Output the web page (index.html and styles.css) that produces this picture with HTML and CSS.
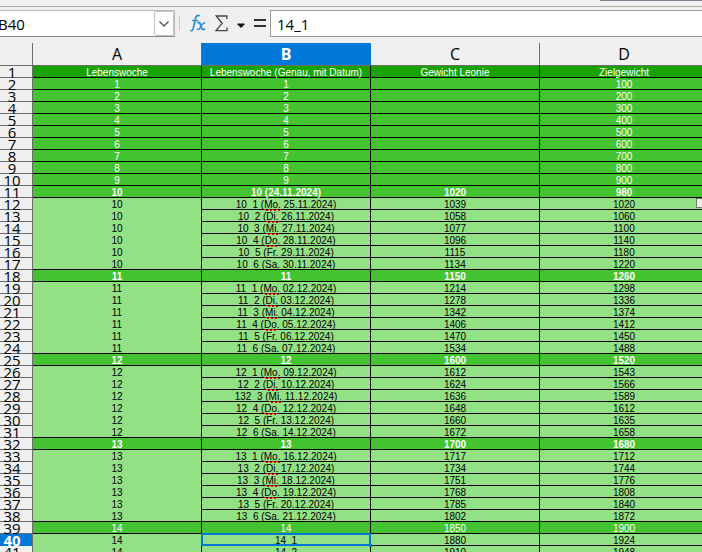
FILE: index.html
```html
<!DOCTYPE html>
<html lang="de">
<head>
<meta charset="utf-8">
<title>Lebenswoche</title>
<link rel="stylesheet" href="styles.css">
</head>
<body>
<div class="top-strip"><span class="top-edge"></span></div>
<form class="formula-bar">
  <div class="name-box">
    <input class="name-input" type="text" value="B40" aria-label="Namenfeld">
    <button class="name-drop" type="button" aria-label="Bereich wählen"><svg width="10" height="6" viewBox="0 0 10 6"><path d="M0.5 0.5 5 5 9.5 0.5" fill="none" stroke="#444" stroke-width="1.2"/></svg></button>
  </div>
  <div class="tools">
    <button class="tool" type="button" aria-label="Funktionsassistent"><svg width="16" height="18" viewBox="0 0 16 18" fill="none" stroke="#2e8fce"><path d="M9.6 2C7.4 0.6 6.1 1.8 5.6 4L3.4 14C2.9 16.4 1.8 17.2 0.3 16.5" stroke-width="1.7"/><path d="M2.2 6.5H8.2" stroke-width="1.4"/><path d="M7.4 8.9C9.4 7.7 10.2 9 10.7 11.4 11.3 15 12.2 16.2 15 14.8" stroke-width="1.9"/><path d="M15.2 8.7C12.4 8.5 11.2 12.2 9.6 14.6 8.9 15.7 8 15.8 6.8 15.3" stroke-width="1.5"/></svg></button>
    <button class="tool" type="button" aria-label="Summe"><svg width="13" height="17" viewBox="0 0 13 17"><path d="M11.9 4V1H1.2L7.2 8.3 1 15.6H12V12.6" fill="none" stroke="#444" stroke-width="1.3"/></svg></button>
    <button class="tool" type="button" aria-label="Funktion wählen"><svg width="8" height="9" viewBox="0 0 8 9"><path d="M0.5 4.5H7.5V5.5L4 9 0.5 5.5Z" fill="#111"/></svg></button>
    <button class="tool" type="button" aria-label="Formel"><svg width="12" height="9" viewBox="0 0 12 9"><path d="M0 1H12M0 7H12" stroke="#333" stroke-width="2"/></svg></button>
  </div>
  <input class="formula-input" type="text" value="14_1" aria-label="Eingabezeile">
</form>
<main class="sheet">
<table class="grid">
<colgroup><col class="col-num"><col class="col"><col class="col"><col class="col"><col class="col"></colgroup>
<thead><tr><th></th><th>A</th><th class="active">B</th><th>C</th><th>D</th></tr></thead>
<tbody>
<tr class="title"><th>1</th><td>Lebenswoche</td><td>Lebenswoche (Genau, mit Datum)</td><td>Gewicht Leonie</td><td>Zielgewicht</td></tr>
<tr class="week"><th>2</th><td>1</td><td>1</td><td></td><td>100</td></tr>
<tr class="week"><th>3</th><td>2</td><td>2</td><td></td><td>200</td></tr>
<tr class="week"><th>4</th><td>3</td><td>3</td><td></td><td>300</td></tr>
<tr class="week"><th>5</th><td>4</td><td>4</td><td></td><td>400</td></tr>
<tr class="week"><th>6</th><td>5</td><td>5</td><td></td><td>500</td></tr>
<tr class="week"><th>7</th><td>6</td><td>6</td><td></td><td>600</td></tr>
<tr class="week"><th>8</th><td>7</td><td>7</td><td></td><td>700</td></tr>
<tr class="week"><th>9</th><td>8</td><td>8</td><td></td><td>800</td></tr>
<tr class="week"><th>10</th><td>9</td><td>9</td><td></td><td>900</td></tr>
<tr class="week bold"><th>11</th><td>10</td><td>10 (24.11.2024)</td><td>1020</td><td>980</td></tr>
<tr><th>12</th><td>10</td><td>10_1 (<u>Mo.</u> 25.11.2024)</td><td>1039</td><td class="noted">1020</td></tr>
<tr><th>13</th><td>10</td><td>10_2 (<u>Di.</u> 26.11.2024)</td><td>1058</td><td>1060</td></tr>
<tr><th>14</th><td>10</td><td>10_3 (<u>Mi.</u> 27.11.2024)</td><td>1077</td><td>1100</td></tr>
<tr><th>15</th><td>10</td><td>10_4 (<u>Do</u>. 28.11.2024)</td><td>1096</td><td>1140</td></tr>
<tr><th>16</th><td>10</td><td>10_5 (Fr. 29.11.2024)</td><td>1115</td><td>1180</td></tr>
<tr class="last"><th>17</th><td>10</td><td>10_6 (Sa. 30.11.2024)</td><td>1134</td><td>1220</td></tr>
<tr class="week bold"><th>18</th><td>11</td><td>11</td><td>1150</td><td>1260</td></tr>
<tr><th>19</th><td>11</td><td>11_1 (<u>Mo.</u> 02.12.2024)</td><td>1214</td><td>1298</td></tr>
<tr><th>20</th><td>11</td><td>11_2 (<u>Di.</u> 03.12.2024)</td><td>1278</td><td>1336</td></tr>
<tr><th>21</th><td>11</td><td>11_3 (<u>Mi.</u> 04.12.2024)</td><td>1342</td><td>1374</td></tr>
<tr><th>22</th><td>11</td><td>11_4 (<u>Do</u>. 05.12.2024)</td><td>1406</td><td>1412</td></tr>
<tr><th>23</th><td>11</td><td>11_5 (Fr. 06.12.2024)</td><td>1470</td><td>1450</td></tr>
<tr class="last"><th>24</th><td>11</td><td>11_6 (Sa. 07.12.2024)</td><td>1534</td><td>1488</td></tr>
<tr class="week bold"><th>25</th><td>12</td><td>12</td><td>1600</td><td>1520</td></tr>
<tr><th>26</th><td>12</td><td>12_1 (<u>Mo.</u> 09.12.2024)</td><td>1612</td><td>1543</td></tr>
<tr><th>27</th><td>12</td><td>12_2 (<u>Di.</u> 10.12.2024)</td><td>1624</td><td>1566</td></tr>
<tr><th>28</th><td>12</td><td>132_3 (<u>Mi.</u> 11.12.2024)</td><td>1636</td><td>1589</td></tr>
<tr><th>29</th><td>12</td><td>12_4 (<u>Do</u>. 12.12.2024)</td><td>1648</td><td>1612</td></tr>
<tr><th>30</th><td>12</td><td>12_5 (Fr. 13.12.2024)</td><td>1660</td><td>1635</td></tr>
<tr class="last"><th>31</th><td>12</td><td>12_6 (Sa. 14.12.2024)</td><td>1672</td><td>1658</td></tr>
<tr class="week bold"><th>32</th><td>13</td><td>13</td><td>1700</td><td>1680</td></tr>
<tr><th>33</th><td>13</td><td>13_1 (<u>Mo.</u> 16.12.2024)</td><td>1717</td><td>1712</td></tr>
<tr><th>34</th><td>13</td><td>13_2 (<u>Di.</u> 17.12.2024)</td><td>1734</td><td>1744</td></tr>
<tr><th>35</th><td>13</td><td>13_3 (<u>Mi.</u> 18.12.2024)</td><td>1751</td><td>1776</td></tr>
<tr><th>36</th><td>13</td><td>13_4 (<u>Do</u>. 19.12.2024)</td><td>1768</td><td>1808</td></tr>
<tr><th>37</th><td>13</td><td>13_5 (Fr. 20.12.2024)</td><td>1785</td><td>1840</td></tr>
<tr class="last"><th>38</th><td>13</td><td>13_6 (Sa. 21.12.2024)</td><td>1802</td><td>1872</td></tr>
<tr class="week"><th>39</th><td>14</td><td>14</td><td>1850</td><td>1900</td></tr>
<tr><th class="active">40</th><td>14</td><td class="cursor">14_1</td><td>1880</td><td>1924</td></tr>
<tr><th>41</th><td>14</td><td>14_2</td><td>1910</td><td>1948</td></tr>
</tbody>
</table>
</main>
</body>
</html>
```
FILE: styles.css
```css
* { box-sizing: border-box; }

body {
  margin: 0;
  height: 100vh;
  overflow: hidden;
  background: #f0f0f0;
  font-family: "Open Sans", "Noto Sans", sans-serif;
  color: #000;
}

.top-strip {
  display: flex;
  justify-content: flex-end;
  height: 7px;
  border-bottom: 1px solid #adadad;
}

.top-edge { width: 102px; height: 1px; background: #7d8290; }

.formula-bar {
  display: flex;
  align-items: flex-start;
  padding-top: 3px;
  height: 36px;
}

.name-box {
  display: flex;
  width: 175px;
  height: 27px;
  background: #fff;
  border: 1px solid #b8b8b8;
  border-left: 0;
  border-bottom-color: #868686;
}

.name-input,
.formula-input {
  min-width: 0;
  padding: 0;
  border: 0;
  background: #fff;
  font: 15px/24px "Open Sans", "Noto Sans", sans-serif;
  color: #000;
  outline: 0;
}

.name-input { flex: 1; text-indent: -2px; }

.name-drop {
  display: flex;
  align-items: center;
  justify-content: center;
  width: 20px;
  padding: 0;
  border: 1px solid #c4c4c4;
  border-radius: 2px;
  background: #fdfdfd;
}

.tools {
  display: flex;
  align-items: center;
  gap: 9px;
  height: 26px;
  margin-left: 4px;
  padding-left: 11px;
  background: linear-gradient(#c8c8c8, #c8c8c8) 0 6px / 1px 14px no-repeat;
}

.tool { display: flex; padding: 0; border: 0; background: none; }

.formula-input {
  flex: 1;
  height: 27px;
  margin-left: 4px;
  padding-left: 6px;
  border: 1px solid #9a9a9a;
  border-right: 0;
}

.sheet { overflow: hidden; }

.grid {
  width: 709px;
  table-layout: fixed;
  border-collapse: separate;
  border-spacing: 0;
}

.col-num { width: 33px; }
.col { width: 169px; }

th {
  padding: 0;
  border: solid #6c6c6c;
  border-width: 0 1px 1px 0;
  font-weight: 400;
  font-size: 15px;
}

thead th { height: 23px; line-height: 22px; font-size: 16px; }

tbody th { height: 12px; padding: 2px 8px 0 0; line-height: 9px; }

th.active { background: #0078d7; color: #fff; font-weight: 700; }
thead th.active { border-right-color: #0078d7; }
tbody th.active { border-bottom-color: #0078d7; }

td {
  height: 12px;
  padding: 2px 0 0;
  border: solid #000;
  border-width: 0 1px 1px 0;
  background: #92e285;
  font: 10px/9px "Liberation Sans", Arial, sans-serif;
  text-align: center;
  white-space: nowrap;
}

td:nth-child(2) { border-bottom-color: #92e285; }

.title td { background: #18a303; color: #fff; }
.week td { background: #43c330; color: #fff; }
.title td, .week td, .last td { border-bottom-color: #000; }
.bold td { font-weight: 700; }

/* Spelling mark: two offset rows of red dashes form the zigzag */
u {
  padding-bottom: 1px;
  text-decoration: none;
  background:
    repeating-linear-gradient(90deg, #f00 0 2px, transparent 2px 4px) left bottom 1px / 100% 1px no-repeat,
    repeating-linear-gradient(90deg, transparent 0 2px, #f00 2px 4px) left bottom / 100% 1px no-repeat;
}

.cursor, .noted { position: relative; }

.cursor::before {
  content: "";
  position: absolute;
  inset: -1px;
  border: 2px solid #0078d7;
}

.cursor::after {
  content: "";
  position: absolute;
  right: -2px;
  bottom: -2px;
  width: 3px;
  height: 3px;
  background: #0078d7;
}

/* Edge of the note frame anchored at the right of the cell */
.noted::after {
  content: "";
  position: absolute;
  top: 0;
  right: 0;
  width: 10px;
  height: 8px;
  border: 1px solid #777;
  background: #e4f2e0;
}
```
